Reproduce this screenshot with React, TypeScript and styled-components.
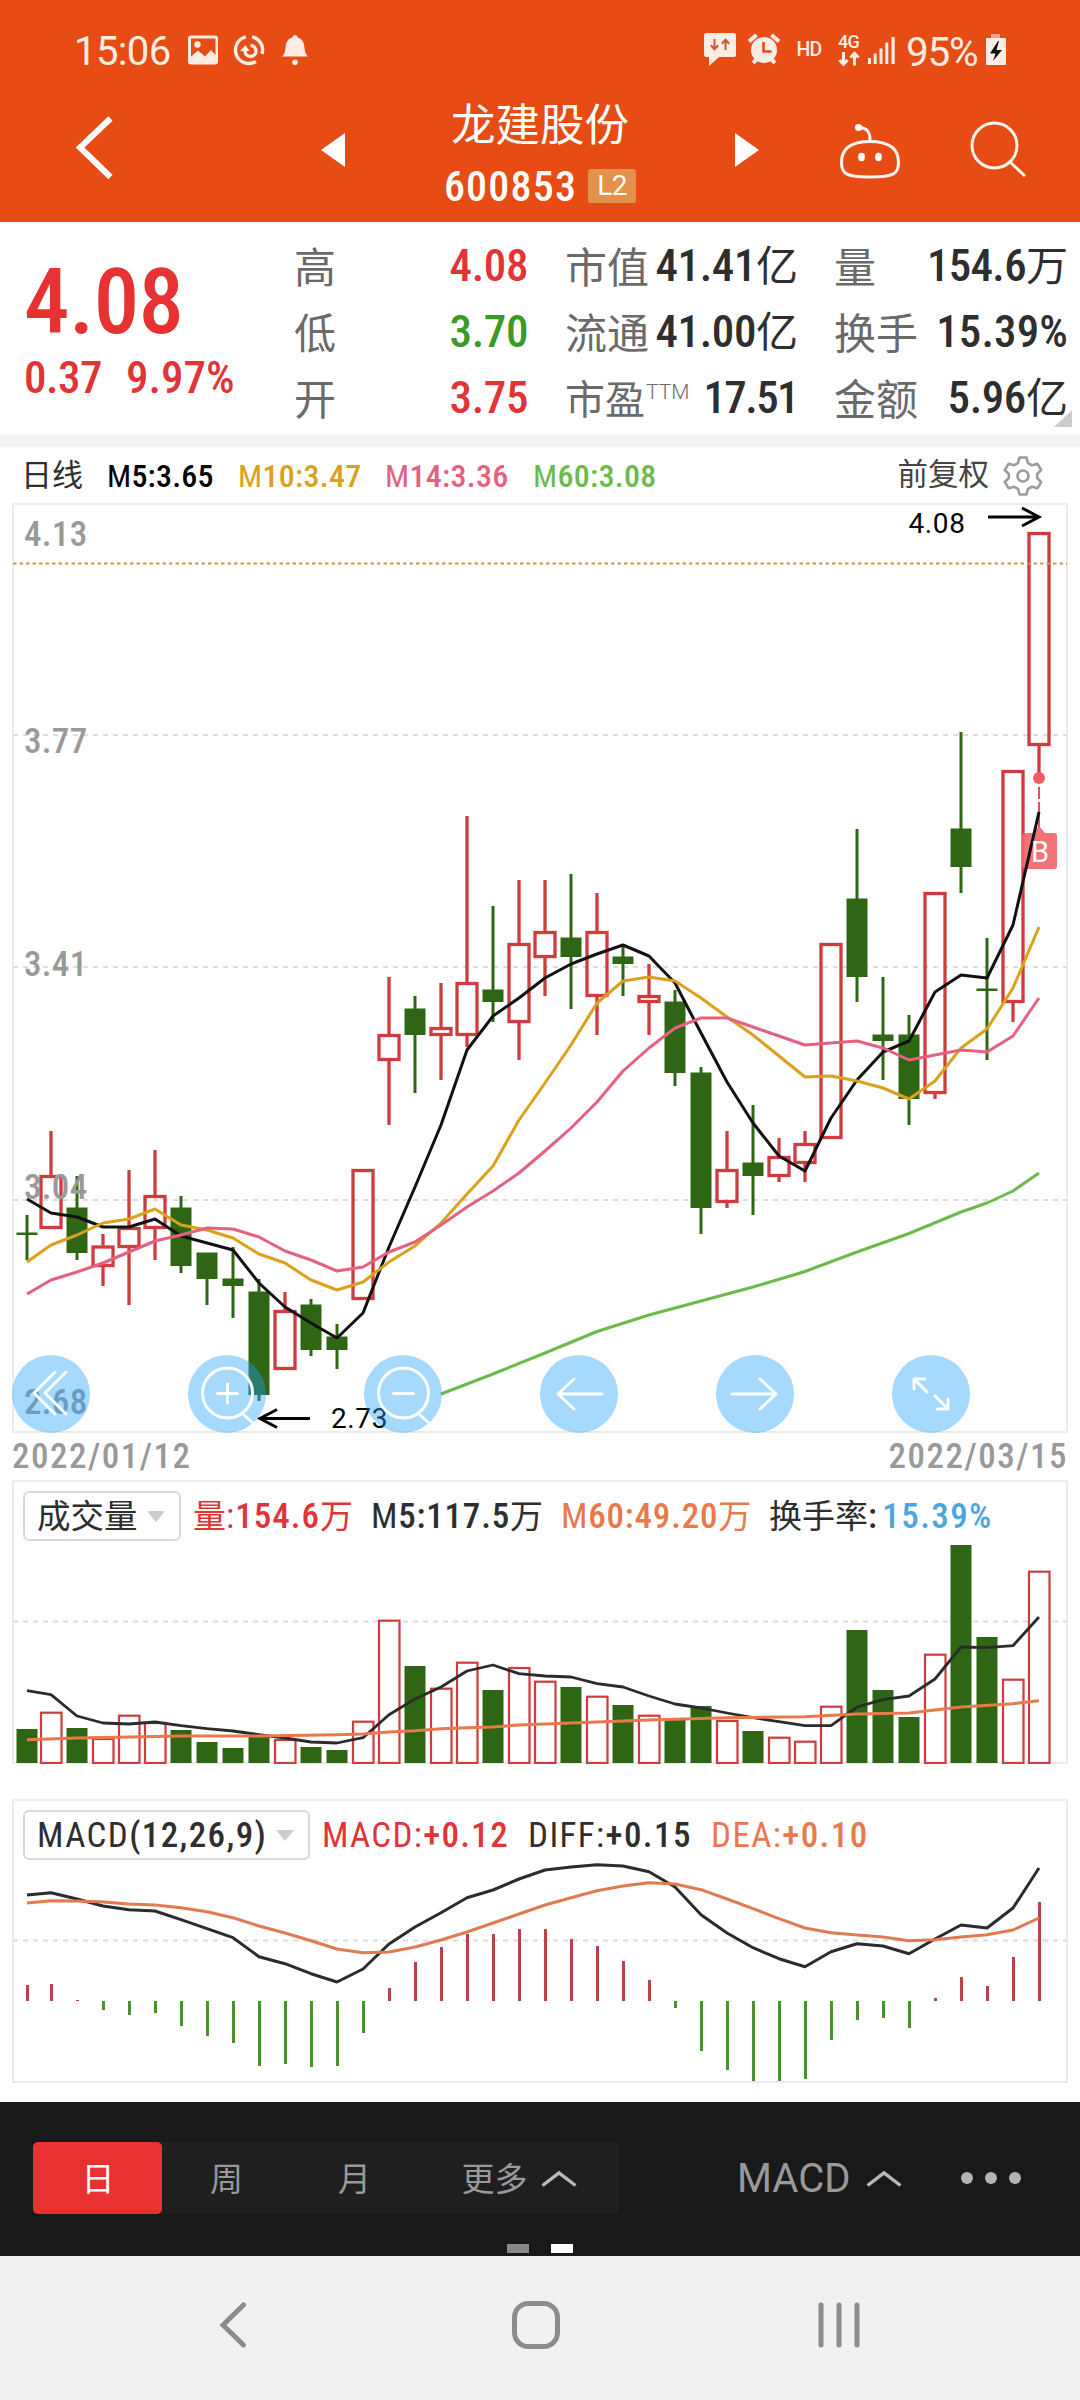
import React from "react";
import styled, { createGlobalStyle } from "styled-components";

const RED = "#e03437";
const GREEN = "#2f6614";
const INK = "#2e2e2e";
const AMBER = "#dba11c";
const PINK = "#e4617f";
const LIME = "#6cba4b";
const ORANGE = "#e9784a";

const CJK = '"Noto Sans CJK SC"';
const NUM_FONT = `"Roboto Condensed", ${CJK}, sans-serif`;

const GlobalStyle = createGlobalStyle`
  body { margin: 0; background: #fff; }
  * { box-sizing: border-box; }
  svg { display: block; flex: none; }
`;

const Page = styled.div`
  width: 1080px;
  height: 2400px;
  display: flex;
  flex-direction: column;
  background: #fff;
  font-family: ${NUM_FONT};
  overflow: hidden;
`;

/* Shared text */
const Txt = styled.span<{
  $size: number;
  $color?: string;
  $weight?: number;
  $ls?: number;
  $font?: string;
}>`
  font-family: ${(p) => p.$font || NUM_FONT};
  font-size: ${(p) => p.$size}px;
  font-weight: ${(p) => p.$weight || 400};
  color: ${(p) => p.$color || INK};
  letter-spacing: ${(p) => p.$ls || 0}px;
  line-height: 1;
  white-space: pre;
`;
const Thin = styled.span`
  font-weight: 400;
`;
const Unit = styled.span<{ $size: number }>`
  font-family: ${CJK}, sans-serif;
  font-weight: 400;
  font-size: ${(p) => p.$size}px;
  letter-spacing: 0;
  line-height: 0;
`;
const Ink = styled.span`
  color: ${INK};
  margin-right: 4px;
`;

/* Header */
const Header = styled.header`
  height: 222px;
  background: #e64c14;
  display: flex;
  flex-direction: column;
`;
const StatusBar = styled.div`
  height: 100px;
  display: flex;
  align-items: center;
  justify-content: space-between;
`;
const StatusGroup = styled.div<{ $pl?: number; $pr?: number }>`
  display: flex;
  align-items: center;
  height: 100px;
  padding-left: ${(p) => p.$pl || 0}px;
  padding-right: ${(p) => p.$pr || 0}px;
`;
const Clock = styled.div`
  width: 113px;
  padding-top: 4px;
  line-height: 1;
`;
const Percent = styled.div`
  width: 79px;
  padding: 4px 0 0 1px;
  line-height: 1;
`;
const TitleBar = styled.div`
  height: 122px;
  display: flex;
`;
const IconButton = styled.button<{ $w: number }>`
  width: ${(p) => p.$w}px;
  height: 122px;
  padding: 0;
  border: 0;
  background: none;
`;
const Title = styled.div`
  width: 300px;
  display: flex;
  flex-direction: column;
  align-items: center;
`;
const Name = styled.div`
  height: 58px;
  line-height: 43px;
`;
const CodeRow = styled.div`
  display: flex;
  align-items: center;
  gap: 11px;
  height: 40px;
  margin-top: 8px;
`;
const Code = styled.div`
  padding-top: 2px;
`;
const Level = styled.span`
  width: 48px;
  height: 34px;
  display: flex;
  align-items: center;
  justify-content: center;
  border-radius: 3px;
  background: #e4914d;
`;

/* Quote */
const Quote = styled.section`
  height: 213px;
  display: flex;
  position: relative;
`;
const PriceBlock = styled.div`
  width: 294px;
  padding: 35px 0 0 24px;
`;
const Price = styled.div`
  height: 91px;
  line-height: 91px;
`;
const Change = styled.div`
  display: flex;
  gap: 24px;
  height: 45px;
  margin-top: 7px;
  align-items: center;
`;
const StatColumn = styled.div<{ $w: number; $ml: number }>`
  width: ${(p) => p.$w}px;
  margin-left: ${(p) => p.$ml}px;
  padding-top: 10px;
  flex: none;
`;
const Stat = styled.div`
  height: 66px;
  display: flex;
  align-items: center;
  justify-content: space-between;
`;
const Sup = styled.sup`
  font-size: 21px;
  line-height: 0;
  vertical-align: 15px;
  font-family: Roboto, sans-serif;
  font-weight: 300;
  margin-left: 1px;
`;
const Fold = styled.i`
  position: absolute;
  right: 8px;
  bottom: 8px;
  border-left: 18px solid transparent;
  border-bottom: 17px solid #cbcbcb;
`;
const Strip = styled.div`
  height: 12px;
  background: #f4f4f4;
`;

/* Moving-average legend */
const Legend = styled.div`
  height: 56px;
  padding: 3px 37px 0 21px;
  display: flex;
  align-items: center;
`;
const LegendItem = styled.div<{ $w: number }>`
  width: ${(p) => p.$w}px;
  padding-bottom: 2px;
`;
const Adjust = styled.div`
  margin-left: auto;
  display: flex;
  align-items: center;
  gap: 14px;
  padding-bottom: 2px;
`;

/* Charts */
const ChartBox = styled.section`
  position: relative;
  margin-left: 12px;
  width: 1056px;
  height: 930px;
`;
const Controls = styled.div`
  position: absolute;
  left: 0;
  bottom: 0;
  display: flex;
  gap: 98px;
`;
const Round = styled.button`
  width: 78px;
  height: 78px;
  padding: 0;
  border: 0;
  border-radius: 50%;
  background: rgba(30, 160, 252, 0.4);
`;
const Dates = styled.div`
  height: 47px;
  padding: 0 12px;
  display: flex;
  align-items: center;
  justify-content: space-between;
`;
const SubChart = styled.section<{ $h: number; $mb: number }>`
  position: relative;
  margin: 0 0 ${(p) => p.$mb}px 12px;
  width: 1056px;
  height: ${(p) => p.$h}px;
  flex: none;
`;
const SubLegend = styled.div`
  position: absolute;
  left: 11px;
  top: 11px;
  height: 50px;
  display: flex;
  align-items: center;
`;
const Select = styled.div<{ $w: number }>`
  width: ${(p) => p.$w}px;
  height: 50px;
  margin-right: 12px;
  padding: 1px 14px 0 12px;
  display: flex;
  align-items: center;
  justify-content: space-between;
  border: 2px solid #d9d9d9;
  border-radius: 6px;
  background: #fff;
`;
const Caret = styled.i`
  border-left: 9px solid transparent;
  border-right: 9px solid transparent;
  border-top: 11px solid #cccccc;
`;
const Value = styled.div<{ $w?: number }>`
  width: ${(p) => (p.$w ? `${p.$w}px` : "auto")};
  padding-top: 1px;
  flex: none;
`;

/* Bottom bars */
const Toolbar = styled.footer`
  height: 154px;
  background: #191919;
  display: flex;
  flex-direction: column;
  align-items: stretch;
`;
const ToolRow = styled.div`
  padding: 40px 0 0 33px;
  height: 142px;
  display: flex;
`;
const Tabs = styled.div`
  width: 586px;
  height: 72px;
  display: flex;
  background: #1f1f1f;
  border-radius: 4px;
`;
const Tab = styled.div<{ $w: number; $active?: boolean }>`
  width: ${(p) => p.$w}px;
  padding: 2px 0 0 1px;
  display: flex;
  align-items: center;
  justify-content: center;
  gap: 13px;
  border-radius: 5px;
  background: ${(p) => (p.$active ? "#e93131" : "transparent")};
`;
const Indicator = styled.div`
  width: 165px;
  height: 72px;
  margin-left: 118px;
  padding-top: 2px;
  display: flex;
  align-items: center;
  justify-content: space-between;
`;
const More = styled.div`
  height: 72px;
  margin-left: 59px;
  display: flex;
  align-items: center;
  gap: 12px;
`;
const Dot = styled.i`
  width: 12px;
  height: 12px;
  border-radius: 50%;
  background: #b3b3b3;
`;
const Pager = styled.div`
  display: flex;
  gap: 22px;
  padding-left: 507px;
`;
const PagerMark = styled.i<{ $on?: boolean }>`
  width: 22px;
  height: 9px;
  background: ${(p) => (p.$on ? "#fff" : "#888")};
`;
const NavBar = styled.nav`
  height: 144px;
  background: #f1f1f1;
`;

/* ---- Data: one entry per trading day, in chart units ---- */
const x = (i: number) => (i === 0 ? 27 : 25 + 26 * i);

type Candle = [boolean, number, number, number, number];
const candles: Candle[] = [
  [false, 1215, 1233, 1235, 1260], [true, 1131, 1175, 1229, 1229], [false, 1176, 1208, 1253, 1260],
  [true, 1234, 1245.5, 1267, 1286], [true, 1170, 1227, 1248, 1305], [true, 1150, 1195, 1229, 1260],
  [false, 1196, 1208, 1266, 1273], [false, 1253, 1253, 1279, 1305], [false, 1247, 1279, 1286, 1318],
  [false, 1279, 1292, 1395, 1401], [true, 1292, 1310, 1370, 1370], [false, 1299, 1305, 1350, 1356],
  [false, 1324, 1337, 1350, 1369], [true, 1169, 1169, 1300, 1300], [true, 977, 1034, 1061, 1125],
  [false, 996, 1009, 1035, 1093], [true, 983, 1027, 1036, 1080], [true, 816, 982, 1036, 1047],
  [false, 906, 990, 1002, 1022], [true, 880, 943, 1023, 1060], [true, 880, 931, 958, 996],
  [false, 874, 938, 957, 1009], [true, 893, 931, 997, 1035], [false, 945, 957, 964, 996],
  [true, 964, 995, 1003, 1035], [false, 990, 1002, 1073, 1086], [false, 1067, 1073, 1208, 1234],
  [true, 1131, 1169, 1203, 1208], [false, 1105, 1163, 1176, 1215], [true, 1138, 1156, 1177, 1182],
  [true, 1131, 1143, 1164, 1182], [true, 943, 943, 1139, 1139], [false, 829, 899, 977, 1002],
  [false, 977, 1035, 1041, 1080], [false, 1015, 1035, 1099, 1125], [true, 892, 892, 1094, 1099],
  [false, 732, 829, 867, 893], [false, 938, 989, 991, 1060], [true, 770, 770, 1003, 1022],
  [true, 532, 532, 746, 778],
];
const ma5 = [1199, 1213, 1217, 1227, 1227, 1219, 1236, 1243, 1250, 1283, 1307, 1323, 1338, 1313, 1247, 1187, 1125, 1050, 1016, 998, 978, 964, 954, 945, 956, 983, 1033, 1082, 1123, 1156, 1171, 1118, 1080, 1052, 1041, 992, 975, 978, 925, 812];
const ma10 = [1262, 1245, 1235, 1223, 1219, 1209, 1225, 1230, 1238, 1254, 1263, 1280, 1290, 1282, 1262, 1246, 1223, 1194, 1166, 1120, 1083, 1045, 1003, 981, 977, 981, 998, 1017, 1035, 1056, 1077, 1076, 1081, 1088, 1099, 1081, 1048, 1029, 988, 927];
const ma14 = [1294, 1280, 1272, 1263, 1252, 1241, 1235, 1228, 1229, 1237, 1251, 1260, 1271, 1267, 1252, 1242, 1225, 1207, 1191, 1173, 1151, 1128, 1102, 1071, 1048, 1028, 1018, 1018, 1027, 1036, 1045, 1043, 1041, 1048, 1060, 1055, 1050, 1052, 1036, 998];
const ma60: [number, number][] = [[441, 1394], [493, 1374], [545, 1353], [597, 1331.5], [649, 1315], [701, 1301], [753, 1287], [805, 1271.5], [857, 1252], [909, 1233.5], [961, 1212], [987, 1203], [1013, 1191], [1039, 1173]];

const volumeTop = [1729, 1711.7, 1728, 1738, 1714.7, 1722, 1730, 1742, 1748, 1736.7, 1739, 1747, 1750, 1720.7, 1619.7, 1666, 1687.7, 1661.7, 1690, 1667, 1680.7, 1687, 1695.7, 1705, 1714.7, 1720, 1706, 1720, 1731, 1736.7, 1740.7, 1705.7, 1630, 1690, 1717, 1653.7, 1545, 1637, 1678.7, 1570.7];
const volMa5 = [1690.7, 1694.7, 1716, 1723, 1724, 1722, 1725.7, 1728.7, 1731, 1734.7, 1738, 1742, 1743, 1737.7, 1714.7, 1699, 1687, 1671, 1665, 1673.7, 1676, 1677, 1683.7, 1687, 1696, 1704, 1708, 1713, 1717.7, 1721.7, 1725.7, 1725.7, 1707, 1699.7, 1696, 1679, 1647, 1647.7, 1645.7, 1617];
const volMa60: [number, number][] = ([[0, 1739.7], [2, 1738], [4, 1737], [6, 1736], [9, 1736], [12, 1734.7], [13, 1734], [14, 1732], [15, 1730.7], [16, 1728.7], [17, 1727.7], [18, 1727], [19, 1725], [21, 1723], [24, 1720], [27, 1717.7], [30, 1716.7], [32, 1714], [34, 1713], [35, 1710], [36, 1707], [38, 1703.7], [39, 1700.7]] as [number, number][]).map(([i, y]) => [x(i), y]);

const macd = [1985, 1984, 2000, 2010, 2015, 2013, 2026, 2036, 2043, 2066, 2064, 2067, 2066, 2033, 1988, 1962, 1947, 1934, 1934, 1929, 1929, 1939, 1946, 1961, 1980, 2008, 2051, 2070, 2081, 2081, 2079, 2040, 2020, 2018, 2028, 1998, 1977, 1986, 1957, 1902];
const diff = [1895, 1892.7, 1899, 1906, 1909.7, 1911, 1919.7, 1928.7, 1937.7, 1956.7, 1963.7, 1973.7, 1982, 1969, 1944, 1927, 1912.7, 1897.7, 1890, 1879, 1870, 1867, 1864.7, 1866, 1871.7, 1887, 1914.7, 1933, 1947.7, 1958.7, 1966.7, 1951.7, 1943.7, 1946, 1953.7, 1939, 1925, 1928, 1908, 1868];
const dea = [1903, 1900.7, 1901, 1902, 1904, 1905, 1907.7, 1911.7, 1917.7, 1926, 1933, 1940.7, 1949, 1952.7, 1952, 1947, 1940, 1932, 1923, 1914, 1905, 1897.7, 1890.7, 1886, 1882.7, 1884, 1889.7, 1899, 1908.7, 1918.7, 1928, 1932.7, 1935, 1937, 1940.7, 1939.7, 1937, 1934.7, 1930, 1918];

const join = (pts: [number, number][]) => pts.map((p) => p.join(",")).join(" ");
const series = (ys: number[]) => join(ys.map((y, i) => [x(i), y] as [number, number]));

const Line = ({ pts, color, w = 3 }: { pts: string; color: string; w?: number }) => (
  <polyline points={pts} fill="none" stroke={color} strokeWidth={w} strokeLinejoin="round" />
);
const Grid = ({ y, color = "#dcdcdc", dash = "5 5" }: { y: number; color?: string; dash?: string }) => (
  <line x1="13" x2="1067" y1={y} y2={y} stroke={color} strokeWidth="2" strokeDasharray={dash} />
);

const AxisText = styled.text`
  font: 500 35px ${NUM_FONT};
  letter-spacing: 0.3px;
  fill: #999;
`;
const MarkText = styled.text`
  font: 400 28px Roboto, sans-serif;
  letter-spacing: 0.6px;
  fill: #000;
`;
const BadgeText = styled.text`
  font: 400 29px Roboto, sans-serif;
  text-anchor: middle;
  fill: #fff;
`;
const TinyText = styled.text<{ $size: number }>`
  font: 500 ${(p) => p.$size}px Roboto, sans-serif;
  letter-spacing: -0.8px;
  fill: #fdeee6;
`;

const PriceChart = () => (
  <svg width="1056" height="930" viewBox="12 503 1056 930">
    <rect x="13" y="504" width="1054" height="928" fill="none" stroke="#ececec" strokeWidth="2" />
    {[735, 967, 1200].map((y) => (
      <Grid key={y} y={y} />
    ))}
    {candles.map(([up, high, top, bottom, low], i) =>
      up ? (
        <g key={i} stroke="#d03b3f" strokeWidth="3.3" fill="none">
          {high < top && <line x1={x(i)} x2={x(i)} y1={high} y2={top} />}
          {low > bottom && <line x1={x(i)} x2={x(i)} y1={bottom} y2={low} />}
          <rect x={x(i) - 10} y={top + 1.5} width="20" height={bottom - top - 3} />
        </g>
      ) : (
        <g key={i} fill={GREEN}>
          <rect x={x(i) - 1.5} y={high} width="3" height={low - high} />
          <rect x={x(i) - 10.5} y={top - 0.5} width="21" height={bottom - top + 0.5} />
        </g>
      )
    )}
    <Grid y={563.5} color="#cc9448" dash="3.5 3" />
    <line x1="1039" x2="1039" y1="787" y2="799" stroke="#dc5558" strokeWidth="2" />
    <line x1="1039" x2="1039" y1="802" y2="828" stroke="#dc5558" strokeWidth="2" />
    <circle cx="1039" cy="778" r="6" fill="#ee5c5e" />
    <path d="M1033 833l6-7 6 7h9q3 0 3 3v30q0 3-3 3h-29q-3 0-3-3v-30q0-3 3-3z" fill="#f0686b" fillOpacity="0.93" />
    <Line pts={series(ma5)} color="#111" />
    <Line pts={series(ma10)} color={AMBER} />
    <Line pts={series(ma14)} color={PINK} />
    <Line pts={join(ma60)} color={LIME} />
    <BadgeText x="1040" y="862">B</BadgeText>
    <AxisText x="24" y="546">4.13</AxisText>
    <AxisText x="24" y="753">3.77</AxisText>
    <AxisText x="24" y="976">3.41</AxisText>
    <AxisText x="24" y="1199">3.04</AxisText>
    <AxisText x="24" y="1414">2.68</AxisText>
    <g fill="none" stroke="#000" strokeWidth="3">
      <path d="M310 1418.5H261M277 1409.5l-17 9 17 9" />
      <path d="M988 517h50M1022 508l17 9-17 9" />
    </g>
    <MarkText x="331" y="1428">2.73</MarkText>
    <MarkText x="908.5" y="533">4.08</MarkText>
  </svg>
);

const VolumeChart = () => (
  <svg width="1056" height="284" viewBox="12 1480 1056 284">
    <rect x="13" y="1481" width="1054" height="282" fill="none" stroke="#ececec" strokeWidth="2" />
    <Grid y={1621.5} />
    {volumeTop.map((top, i) =>
      candles[i][0] ? (
        <rect key={i} x={x(i) - 10} y={top + 1} width="20.5" height={1762 - top} fill="#fff" stroke="#d03b3f" strokeWidth="2.2" />
      ) : (
        <rect key={i} x={x(i) - 10.5} y={top} width="21" height={1763 - top} fill={GREEN} />
      )
    )}
    <Line pts={series(volMa5)} color="#2b2b2b" w={2.8} />
    <Line pts={join(volMa60)} color={ORANGE} />
  </svg>
);

const MacdChart = () => (
  <svg width="1056" height="284" viewBox="12 1799 1056 284">
    <rect x="13" y="1800" width="1054" height="282" fill="none" stroke="#ececec" strokeWidth="2" />
    <Grid y={1940.5} />
    {macd.map((v, i) => (
      <rect key={i} x={x(i) - 1} y={Math.min(v, 2001)} width="3" height={Math.abs(2001 - v)} fill={v < 2001 ? "#b8434a" : "#4a9136"} />
    ))}
    <Line pts={series(diff)} color="#2b2b2b" />
    <Line pts={series(dea)} color="#e07a50" />
  </svg>
);

const Lens = ({ plus }: { plus?: boolean }) => (
  <svg width="78" height="78" viewBox="0 0 78 78" fill="none" stroke="#fff" strokeWidth="3" strokeLinecap="round">
    <circle cx="39.5" cy="38" r="25" />
    <path d="M56 60l10 9M29.500 38.500h20" />
    {plus && <path d="M39.500 29v19" />}
  </svg>
);
const Glyph = ({ d }: { d: string }) => (
  <svg width="78" height="78" viewBox="0 0 78 78" fill="none" stroke="#fff" strokeWidth="3" strokeLinecap="round" strokeLinejoin="round">
    <path d={d} />
  </svg>
);

const StatusLeftIcons = () => (
  <svg width="122" height="36" viewBox="188 31 122 36" fill="#fdece4">
    <path fillRule="evenodd" d="M192 34.500h24q3 0 3 3v23q0 3-3 3h-24q-3 0-3-3v-23q0-3 3-3zM192 37.500v18l7-6 7 6 6-6.500 4.500 5V37.500z" />
    <circle cx="198.500" cy="43.500" r="3.200" />
    <g fill="none" stroke="#fdece4" strokeWidth="3.400">
      <path d="M247 35.800A13.500 13.500 0 1 0 257 60.500M253 35.800A13.500 13.500 0 0 1 263 53" />
      <path d="M251.500 44.500A5.500 5.500 0 1 1 246 50" />
    </g>
    <path d="M241 50l5.500-6 4 6z" />
    <path d="M296 34q2.500 0 2.800 2.500c5 1.500 6.400 5.500 6.700 10.500.2 4 1.500 6.500 3.500 8.500h-26c2-2 3.300-4.500 3.500-8.500.3-5 1.700-9 6.700-10.500Q293.500 34 296 34z" />
    <circle cx="296" cy="61.300" r="2.800" />
  </svg>
);
const StatusRightIcons = () => (
  <svg width="203" height="40" viewBox="702 30 203 40" fill="#fdece4">
    <path d="M706 33h28q2 0 2 2v20q0 2-2 2h-15l-10 9v-9h-3q-2 0-2-2V35q0-2 2-2z" />
    <path d="M714.500 39v10m-3.700-3.700l3.700 3.900 3.700-3.900M725.500 50V40m-3.700 3.700l3.700-3.900 3.700 3.900" fill="none" stroke="#c65a33" strokeWidth="2" />
    <circle cx="764" cy="50" r="13" />
    <path d="M749 41.500l7.500-6.500M779 41.500l-7.500-6.500M753 63l4-4M775 63l-4-4" stroke="#fdece4" strokeWidth="4" />
    <path d="M763.500 42v9.500h8" fill="none" stroke="#e64c14" strokeWidth="2.600" />
    <TinyText $size={19.5} x="796.500" y="55.500">HD</TinyText>
    <TinyText $size={18} x="838" y="48">4G</TinyText>
    <path d="M843.500 52v12m-4-4l4 4.300 4-4.300M854.500 65.500v-12m-4 4l4-4.300 4 4.300" fill="none" stroke="#fdece4" strokeWidth="3" />
    <path d="M868 58h3v6h-3zM873.700 53.500h3V64h-3zM879.500 48.500h3V64h-3zM885.300 42.500h3V64h-3zM891.500 37h3.200v27h-3.200z" />
  </svg>
);
const Battery = () => (
  <svg width="24" height="36" viewBox="984 32 24 36">
    <path d="M991 34h9v5h-9z" fill="#f4a88a" />
    <rect x="986" y="38" width="20" height="27" rx="1" fill="#fdece4" />
    <path d="M998 41l-8 12.500h5.500L993 61l9-11h-5.500l2.500-9z" fill="#111" />
  </svg>
);

const Chevron = () => (
  <svg width="36" height="18" viewBox="0 0 36 18" fill="none" stroke="#b9b9b9" strokeWidth="3.400">
    <path d="M1.500 15.500L18 3l16.500 12.500" />
  </svg>
);

const StatValue = ({ n, unit, color = INK, ls = -0.4 }: { n: string; unit?: string; color?: string; ls?: number }) => (
  <Txt $size={45} $weight={500} $color={color} $ls={ls}>
    {n}
    {unit && <Unit $size={42}>{unit}</Unit>}
  </Txt>
);
const Label = ({ children }: { children: React.ReactNode }) => (
  <Txt $size={42} $color="#6a6a6a" $weight={400} $font={`${CJK}, sans-serif`}>
    {children}
  </Txt>
);

export default function App() {
  return (
    <Page>
      <GlobalStyle />
      <Header>
        <StatusBar>
          <StatusGroup $pl={74}>
            <Clock>
              <Txt $size={40} $color="#fdece4" $font="Roboto, sans-serif" $ls={-0.6}>15:06</Txt>
            </Clock>
            <StatusLeftIcons />
          </StatusGroup>
          <StatusGroup $pr={72}>
            <StatusRightIcons />
            <Percent>
              <Txt $size={40.5} $color="#fdece4" $font="Roboto, sans-serif" $ls={-1.2}>95%</Txt>
            </Percent>
            <Battery />
          </StatusGroup>
        </StatusBar>
        <TitleBar>
          <IconButton $w={230}>
            <svg width="230" height="122" viewBox="0 100 230 122" fill="none" stroke="#fff" strokeWidth="6">
              <path d="M110.500 118.500L80 147.500l30.500 29.500" />
            </svg>
          </IconButton>
          <IconButton $w={160}>
            <svg width="160" height="122" viewBox="230 100 160 122" fill="#fff">
              <path d="M345 133v34l-24-17z" />
            </svg>
          </IconButton>
          <Title>
            <Name>
              <Txt $size={44.5} $color="#fff" $weight={400} $font={`${CJK}, sans-serif`}>龙建股份</Txt>
            </Name>
            <CodeRow>
              <Code>
                <Txt $size={42} $weight={500} $color="#fff" $ls={1.2}>600853</Txt>
              </Code>
              <Level>
                <Txt $size={28} $color="#fff" $font="Roboto, sans-serif" $ls={-0.5}>L2</Txt>
              </Level>
            </CodeRow>
          </Title>
          <IconButton $w={110}>
            <svg width="110" height="122" viewBox="690 100 110 122" fill="#fff">
              <path d="M735 133v34l24-17z" />
            </svg>
          </IconButton>
          <IconButton $w={140}>
            <svg width="140" height="122" viewBox="800 100 140 122" fill="none" stroke="#fff4ee" strokeWidth="3">
              <path d="M870 141.500c17 0 28.500 6 28.500 21 0 11-4 14.500-28.500 14.500s-28.500-3.500-28.500-14.500c0-15 11.500-21 28.500-21z" />
              <path d="M859 127.500c8 0 11.500 5 11 14" />
              <circle cx="858.500" cy="127.500" r="3.600" fill="#fff" stroke="none" />
              <ellipse cx="861.500" cy="157" rx="3.400" ry="4.200" fill="#fff" stroke="none" />
              <ellipse cx="878.500" cy="157" rx="3.400" ry="4.200" fill="#fff" stroke="none" />
            </svg>
          </IconButton>
          <IconButton $w={140}>
            <svg width="140" height="122" viewBox="940 100 140 122" fill="none" stroke="#fff4ee" strokeWidth="3">
              <circle cx="994.500" cy="145.500" r="22.500" />
              <path d="M1009.500 161.500l15.500 14.500" />
            </svg>
          </IconButton>
        </TitleBar>
      </Header>

      <Quote>
        <PriceBlock>
          <Price>
            <Txt $size={91} $weight={500} $color="#e63232" $ls={-0.6}>4.08</Txt>
          </Price>
          <Change>
            <Txt $size={45} $weight={500} $color={RED} $ls={-0.5}>0.37</Txt>
            <Txt $size={45} $weight={500} $color={RED}>9.97%</Txt>
          </Change>
        </PriceBlock>
        <StatColumn $w={234} $ml={0}>
          <Stat><Label>高</Label><StatValue n="4.08" color={RED} /></Stat>
          <Stat><Label>低</Label><StatValue n="3.70" color="#3a9a26" /></Stat>
          <Stat><Label>开</Label><StatValue n="3.75" color={RED} /></Stat>
        </StatColumn>
        <StatColumn $w={233} $ml={37}>
          <Stat><Label>市值</Label><StatValue n="41.41" unit="亿" /></Stat>
          <Stat><Label>流通</Label><StatValue n="41.00" unit="亿" /></Stat>
          <Stat>
            <Txt $size={40} $color="#6a6a6a" $font={`${CJK}, sans-serif`}>市盈<Sup>TTM</Sup></Txt>
            <StatValue n="17.51" ls={-1.6} />
          </Stat>
        </StatColumn>
        <StatColumn $w={234} $ml={36}>
          <Stat><Label>量</Label><StatValue n="154.6" unit="万" ls={-0.7} /></Stat>
          <Stat><Label>换手</Label><StatValue n="15.39%" ls={0.1} /></Stat>
          <Stat><Label>金额</Label><StatValue n="5.96" unit="亿" /></Stat>
        </StatColumn>
        <Fold />
      </Quote>
      <Strip />

      <Legend>
        <LegendItem $w={86}><Txt $size={31}>日线</Txt></LegendItem>
        <LegendItem $w={131}><Txt $size={32} $weight={500} $color="#000" $ls={0.2}><Thin>M</Thin>5:3.65</Txt></LegendItem>
        <LegendItem $w={147}><Txt $size={32} $weight={500} $color={AMBER} $ls={0.3}><Thin>M</Thin>10:3.47</Txt></LegendItem>
        <LegendItem $w={148}><Txt $size={32} $weight={500} $color={PINK} $ls={0.3}><Thin>M</Thin>14:3.36</Txt></LegendItem>
        <LegendItem $w={147}><Txt $size={32} $weight={500} $color={LIME} $ls={0.3}><Thin>M</Thin>60:3.08</Txt></LegendItem>
        <Adjust>
          <Txt $size={30.5} $color="#444">前复权</Txt>
          <svg width="40" height="40" viewBox="0 0 40 40" fill="none" stroke="#9b9b9b" strokeWidth="2.600" strokeLinejoin="round">
            <path d="M16.500 1.500h7l1.500 5.500 4 2.300 5.500-1.500 3.700 6.200-4 4v4l4 4-3.700 6.200-5.500-1.500-4 2.300-1.500 5.500h-7L15 33l-4-2.300-5.500 1.500L1.800 26l4-4v-4l-4-4 3.700-6.200L11 9.300 15 7z" />
            <circle cx="20" cy="20" r="5.500" />
          </svg>
        </Adjust>
      </Legend>

      <ChartBox>
        <PriceChart />
        <Controls>
          <Round><Glyph d="M43 17L22 38l21 21M54 17L33 38l21 21" /></Round>
          <Round><Lens plus /></Round>
          <Round><Lens /></Round>
          <Round><Glyph d="M62 39H18M34 24L18 39l16 15" /></Round>
          <Round><Glyph d="M16 39h44M44 24l16 15-16 15" /></Round>
          <Round><Glyph d="M22 34V24h11M23 25l12 12M56 44v10H45M55 53L43 41" /></Round>
        </Controls>
      </ChartBox>
      <Dates>
        <Txt $size={35} $weight={500} $color="#999" $ls={1.5}>2022/01/12</Txt>
        <Txt $size={35} $weight={500} $color="#999" $ls={1.5}>2022/03/15</Txt>
      </Dates>

      <SubChart $h={284} $mb={35}>
        <VolumeChart />
        <SubLegend>
          <Select $w={158}><Txt $size={33.500}>成交量</Txt><Caret /></Select>
          <Value $w={178}><Txt $size={35} $weight={500} $color={RED} $ls={1}><Unit $size={33}>量</Unit><Thin>:</Thin>154.6<Unit $size={33}>万</Unit></Txt></Value>
          <Value $w={190}><Txt $size={35} $weight={500} $ls={0.8}><Thin>M</Thin>5:117.5<Unit $size={33}>万</Unit></Txt></Value>
          <Value $w={208}><Txt $size={35} $weight={500} $color={ORANGE} $ls={0.8}><Thin>M</Thin>60:49.20<Unit $size={33}>万</Unit></Txt></Value>
          <Value><Txt $size={35} $weight={500} $color="#4ba6dc" $ls={1.4}><Ink><Unit $size={33}>换手率</Unit>:</Ink>15.39%</Txt></Value>
        </SubLegend>
      </SubChart>

      <SubChart $h={284} $mb={19}>
        <MacdChart />
        <SubLegend>
          <Select $w={287}><Txt $size={35} $weight={500} $ls={1.4}><Thin>MACD</Thin>(12,26,9)</Txt><Caret /></Select>
          <Value $w={206}><Txt $size={35} $weight={500} $color={RED} $ls={1.3}><Thin>MACD:</Thin>+0.12</Txt></Value>
          <Value $w={183}><Txt $size={35} $weight={500} $ls={1.4}><Thin>DIFF:</Thin>+0.15</Txt></Value>
          <Value><Txt $size={35} $weight={500} $color={ORANGE} $ls={1.4}><Thin>DEA:</Thin>+0.10</Txt></Value>
        </SubLegend>
      </SubChart>

      <Toolbar>
        <ToolRow>
          <Tabs>
            <Tab $w={129} $active><Txt $size={33} $color="#fff">日</Txt></Tab>
            <Tab $w={128}><Txt $size={33} $color="#999">周</Txt></Tab>
            <Tab $w={128}><Txt $size={33} $color="#999">月</Txt></Tab>
            <Tab $w={201}><Txt $size={33} $color="#999">更多</Txt><Chevron /></Tab>
          </Tabs>
          <Indicator>
            <Txt $size={40} $color="#999" $font="Roboto, sans-serif">MACD</Txt>
            <Chevron />
          </Indicator>
          <More><Dot /><Dot /><Dot /></More>
        </ToolRow>
        <Pager><PagerMark /><PagerMark $on /></Pager>
      </Toolbar>
      <NavBar>
        <svg width="1080" height="144" viewBox="0 2256 1080 144" fill="none" stroke="#8c8c8c" strokeWidth="5" strokeLinecap="round">
          <path d="M243.500 2305L223 2325l20.500 20" />
          <rect x="514.500" y="2303.500" width="43" height="43" rx="14" />
          <path d="M821 2305v40M839 2305v40M857 2305v40" />
        </svg>
      </NavBar>
    </Page>
  );
}
